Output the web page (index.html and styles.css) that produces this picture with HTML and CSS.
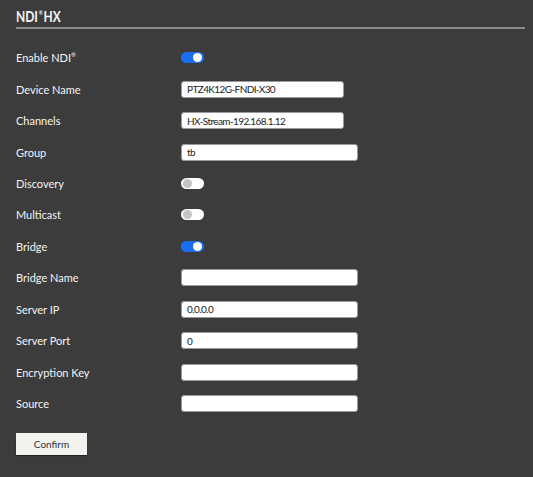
FILE: index.html
```html
<!DOCTYPE html>
<html lang="en">
    <head>
        <meta charset="UTF-8">
        <title>NDI HX</title>
        <link rel="stylesheet" href="styles.css">
    </head>
    <body>
        <div class="panel">
            <h1 class="title"><span class="title-text">NDI<sup>®</sup>HX</span></h1>
            <div class="form">
                <div class="row">
                    <label>Enable NDI<sup>®</sup></label>
                    <span class="switch on"></span>
                </div>
                <div class="row">
                    <label>Device Name</label>
                    <input type="text" class="short" value="PTZ4K12G-FNDI-X30">
                </div>
                <div class="row">
                    <label>Channels</label>
                    <input type="text" class="short" value="HX-Stream-192.168.1.12">
                </div>
                <div class="row">
                    <label>Group</label>
                    <input type="text" value="tb">
                </div>
                <div class="row">
                    <label>Discovery</label>
                    <span class="switch"></span>
                </div>
                <div class="row">
                    <label>Multicast</label>
                    <span class="switch"></span>
                </div>
                <div class="row">
                    <label>Bridge</label>
                    <span class="switch on"></span>
                </div>
                <div class="row">
                    <label>Bridge Name</label>
                    <input type="text" value="">
                </div>
                <div class="row">
                    <label>Server IP</label>
                    <input type="text" value="0.0.0.0">
                </div>
                <div class="row">
                    <label>Server Port</label>
                    <input type="text" value="0">
                </div>
                <div class="row">
                    <label>Encryption Key</label>
                    <input type="text" value="">
                </div>
                <div class="row">
                    <label>Source</label>
                    <input type="text" value="">
                </div>
            </div>
            <button class="confirm">Confirm</button>
        </div>
    </body>
</html>
```

FILE: styles.css
```css
html,
body {
    margin: 0;
    background: #3c3c3c;
}
body {
    font-family: 'Lato', 'Noto Sans', sans-serif;
    color: #f4f4f4;
    height: 477px;
    overflow: hidden;
}
.panel {
    padding: 0 8px 0 16px;
}
.title {
    margin: 0;
    padding-top: 4px;
    height: 23px;
    font-size: 15px;
    font-weight: 700;
    line-height: 24px;
    border-bottom: 2px solid #8c8c8c;
}
.title-text {
    display: inline-block;
    transform: scaleX(0.8);
    transform-origin: left center;
}
.title sup,
label sup {
    font-size: 6px;
    vertical-align: top;
    line-height: 6px;
    position: relative;
    top: 6px;
    margin: 0 1px;
}
label sup {
    top: 1px;
    margin: 0;
}
.form {
    padding-top: 13px;
}
.row {
    display: flex;
    align-items: center;
    height: 31.45px;
}
label {
    width: 165px;
    font-size: 11px;
    font-weight: 400;
}
input[type="text"] {
    width: 177px;
    height: 17px;
    box-sizing: border-box;
    border: 1px solid #9a9a9a;
    border-radius: 3px;
    background: #fff;
    padding: 0 5px;
    font-family: 'Lato', sans-serif;
    font-size: 10px;
    letter-spacing: -0.6px;
    color: #222;
}
input.short {
    width: 163px;
}
.switch {
    position: relative;
    display: inline-block;
    width: 23px;
    height: 11px;
    border-radius: 6px;
    background: #fff;
}
.switch::after {
    content: "";
    position: absolute;
    top: 1px;
    left: 2px;
    width: 9px;
    height: 9px;
    border-radius: 50%;
    background: #c4c4c4;
}
.switch.on {
    background: #1a6ef5;
}
.switch.on::after {
    left: 12px;
    background: #fff;
}
.confirm {
    margin-top: 14px;
    width: 71px;
    height: 22px;
    border: none;
    border-radius: 0;
    background: #f2f2ee;
    color: #333;
    font-family: 'Lato', sans-serif;
    font-size: 10px;
    box-shadow: 0 1px 1px rgba(0,0,0,0.4);
    cursor: pointer;
}
```
